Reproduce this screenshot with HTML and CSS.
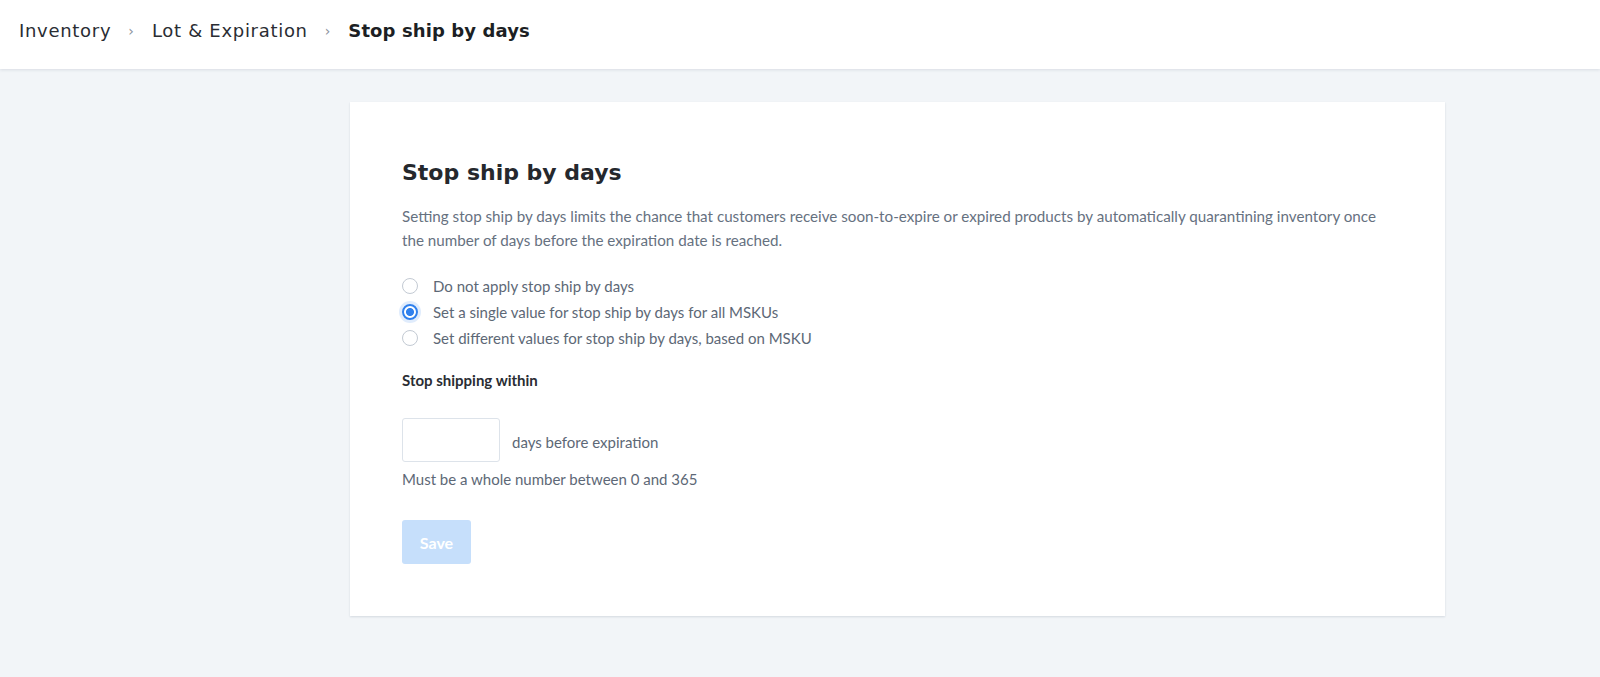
FILE: index.html
```html
<!DOCTYPE html>
<html>
<head>
<meta charset="utf-8">
<link rel="stylesheet" href="styles.css">
</head>
<body>
<header class="topbar">
  <nav class="crumbs">
    <span class="crumb">Inventory</span>
    <span class="sep">›</span>
    <span class="crumb">Lot &amp; Expiration</span>
    <span class="sep">›</span>
    <span class="crumb current">Stop ship by days</span>
  </nav>
</header>
<main class="page">
  <section class="card">
    <h1 class="title">Stop ship by days</h1>
    <p class="desc">Setting stop ship by days limits the chance that customers receive soon-to-expire or expired products by automatically quarantining inventory once the number of days before the expiration date is reached.</p>
    <div class="radios">
      <label class="radio"><span class="dot"></span><span>Do not apply stop ship by days</span></label>
      <label class="radio"><span class="dot on"></span><span>Set a single value for stop ship by days for all MSKUs</span></label>
      <label class="radio"><span class="dot"></span><span>Set different values for stop ship by days, based on MSKU</span></label>
    </div>
    <div class="field-label">Stop shipping within</div>
    <div class="field-row">
      <div class="input"></div>
      <span class="suffix">days before expiration</span>
    </div>
    <div class="hint">Must be a whole number between 0 and 365</div>
    <button class="save">Save</button>
  </section>
</main>
</body>
</html>
```
FILE: styles.css
```css
html, body { margin: 0; padding: 0; }
body {
  background: #f2f5f8;
  font-family: Lato, "Open Sans", sans-serif;
  width: 1600px;
  height: 677px;
  overflow: hidden;
}
.topbar {
  height: 69px;
  background: #fff;
  box-shadow: 0 1px 3px rgba(30, 50, 80, 0.12);
  display: flex;
  align-items: center;
  padding-left: 19px;
  position: relative;
}
.crumbs {
  display: flex;
  align-items: center;
  font-family: "DejaVu Sans", Inter, sans-serif;
  font-size: 18px;
  color: #2a2d33;
  margin-top: -8px;
}
.crumb { letter-spacing: 0.7px; }
.sep {
  font-size: 14px;
  color: #8a929c;
  margin: 0 18px 0 17px;
}
.crumb.current { font-weight: 700; color: #1c1f24; letter-spacing: 0.1px; }
.page {
  padding: 33px 0 0 350px;
}
.card {
  width: 1095px;
  height: 514px;
  box-sizing: border-box;
  background: #fff;
  box-shadow: 0 1px 2px rgba(30, 50, 80, 0.14);
  padding: 56px 52px 0 52px;
}
.title {
  margin: 0;
  font-family: "DejaVu Sans", Inter, sans-serif;
  font-weight: 700;
  font-size: 22px;
  line-height: 30px;
  color: #25282d;
}
.desc {
  margin: 16px 0 0 0;
  font-size: 15.2px;
  line-height: 24px;
  color: #66717f;
  max-width: 985px;
}
.radios {
  margin-top: 23px;
  display: flex;
  flex-direction: column;
  gap: 4px;
}
.radio {
  display: flex;
  align-items: center;
  font-size: 15px;
  line-height: 22px;
  color: #5d6876;
}
.dot {
  width: 16px;
  height: 16px;
  box-sizing: border-box;
  border: 1px solid #c3cad3;
  border-radius: 50%;
  margin-right: 15px;
  flex: none;
}
.dot.on {
  border: 2px solid #2f80ed;
  background: radial-gradient(circle, #2f80ed 0 3.6px, #fff 4.4px);
  box-shadow: 0 0 0 3px rgba(47, 128, 237, 0.15);
}
.field-label {
  margin-top: 22px;
  font-size: 15px;
  font-weight: 700;
  color: #2a2d33;
  line-height: 18px;
}
.field-row {
  margin-top: 29px;
  display: flex;
  align-items: center;
}
.input {
  width: 98px;
  height: 44px;
  box-sizing: border-box;
  border: 1px solid #dde3ea;
  border-radius: 3px;
  background: #fff;
}
.suffix {
  margin-left: 12px;
  font-size: 15px;
  color: #5d6876;
  margin-top: 3px;
}
.hint {
  margin-top: 6px;
  font-size: 15px;
  line-height: 22px;
  color: #5d6876;
}
.save {
  display: block;
  margin-top: 30px;
  width: 69px;
  height: 44px;
  border: none;
  border-radius: 3px;
  background: #c6dffb;
  color: #fff;
  font-family: Lato, sans-serif;
  font-weight: 700;
  font-size: 16px;
  padding: 0;
}
```
